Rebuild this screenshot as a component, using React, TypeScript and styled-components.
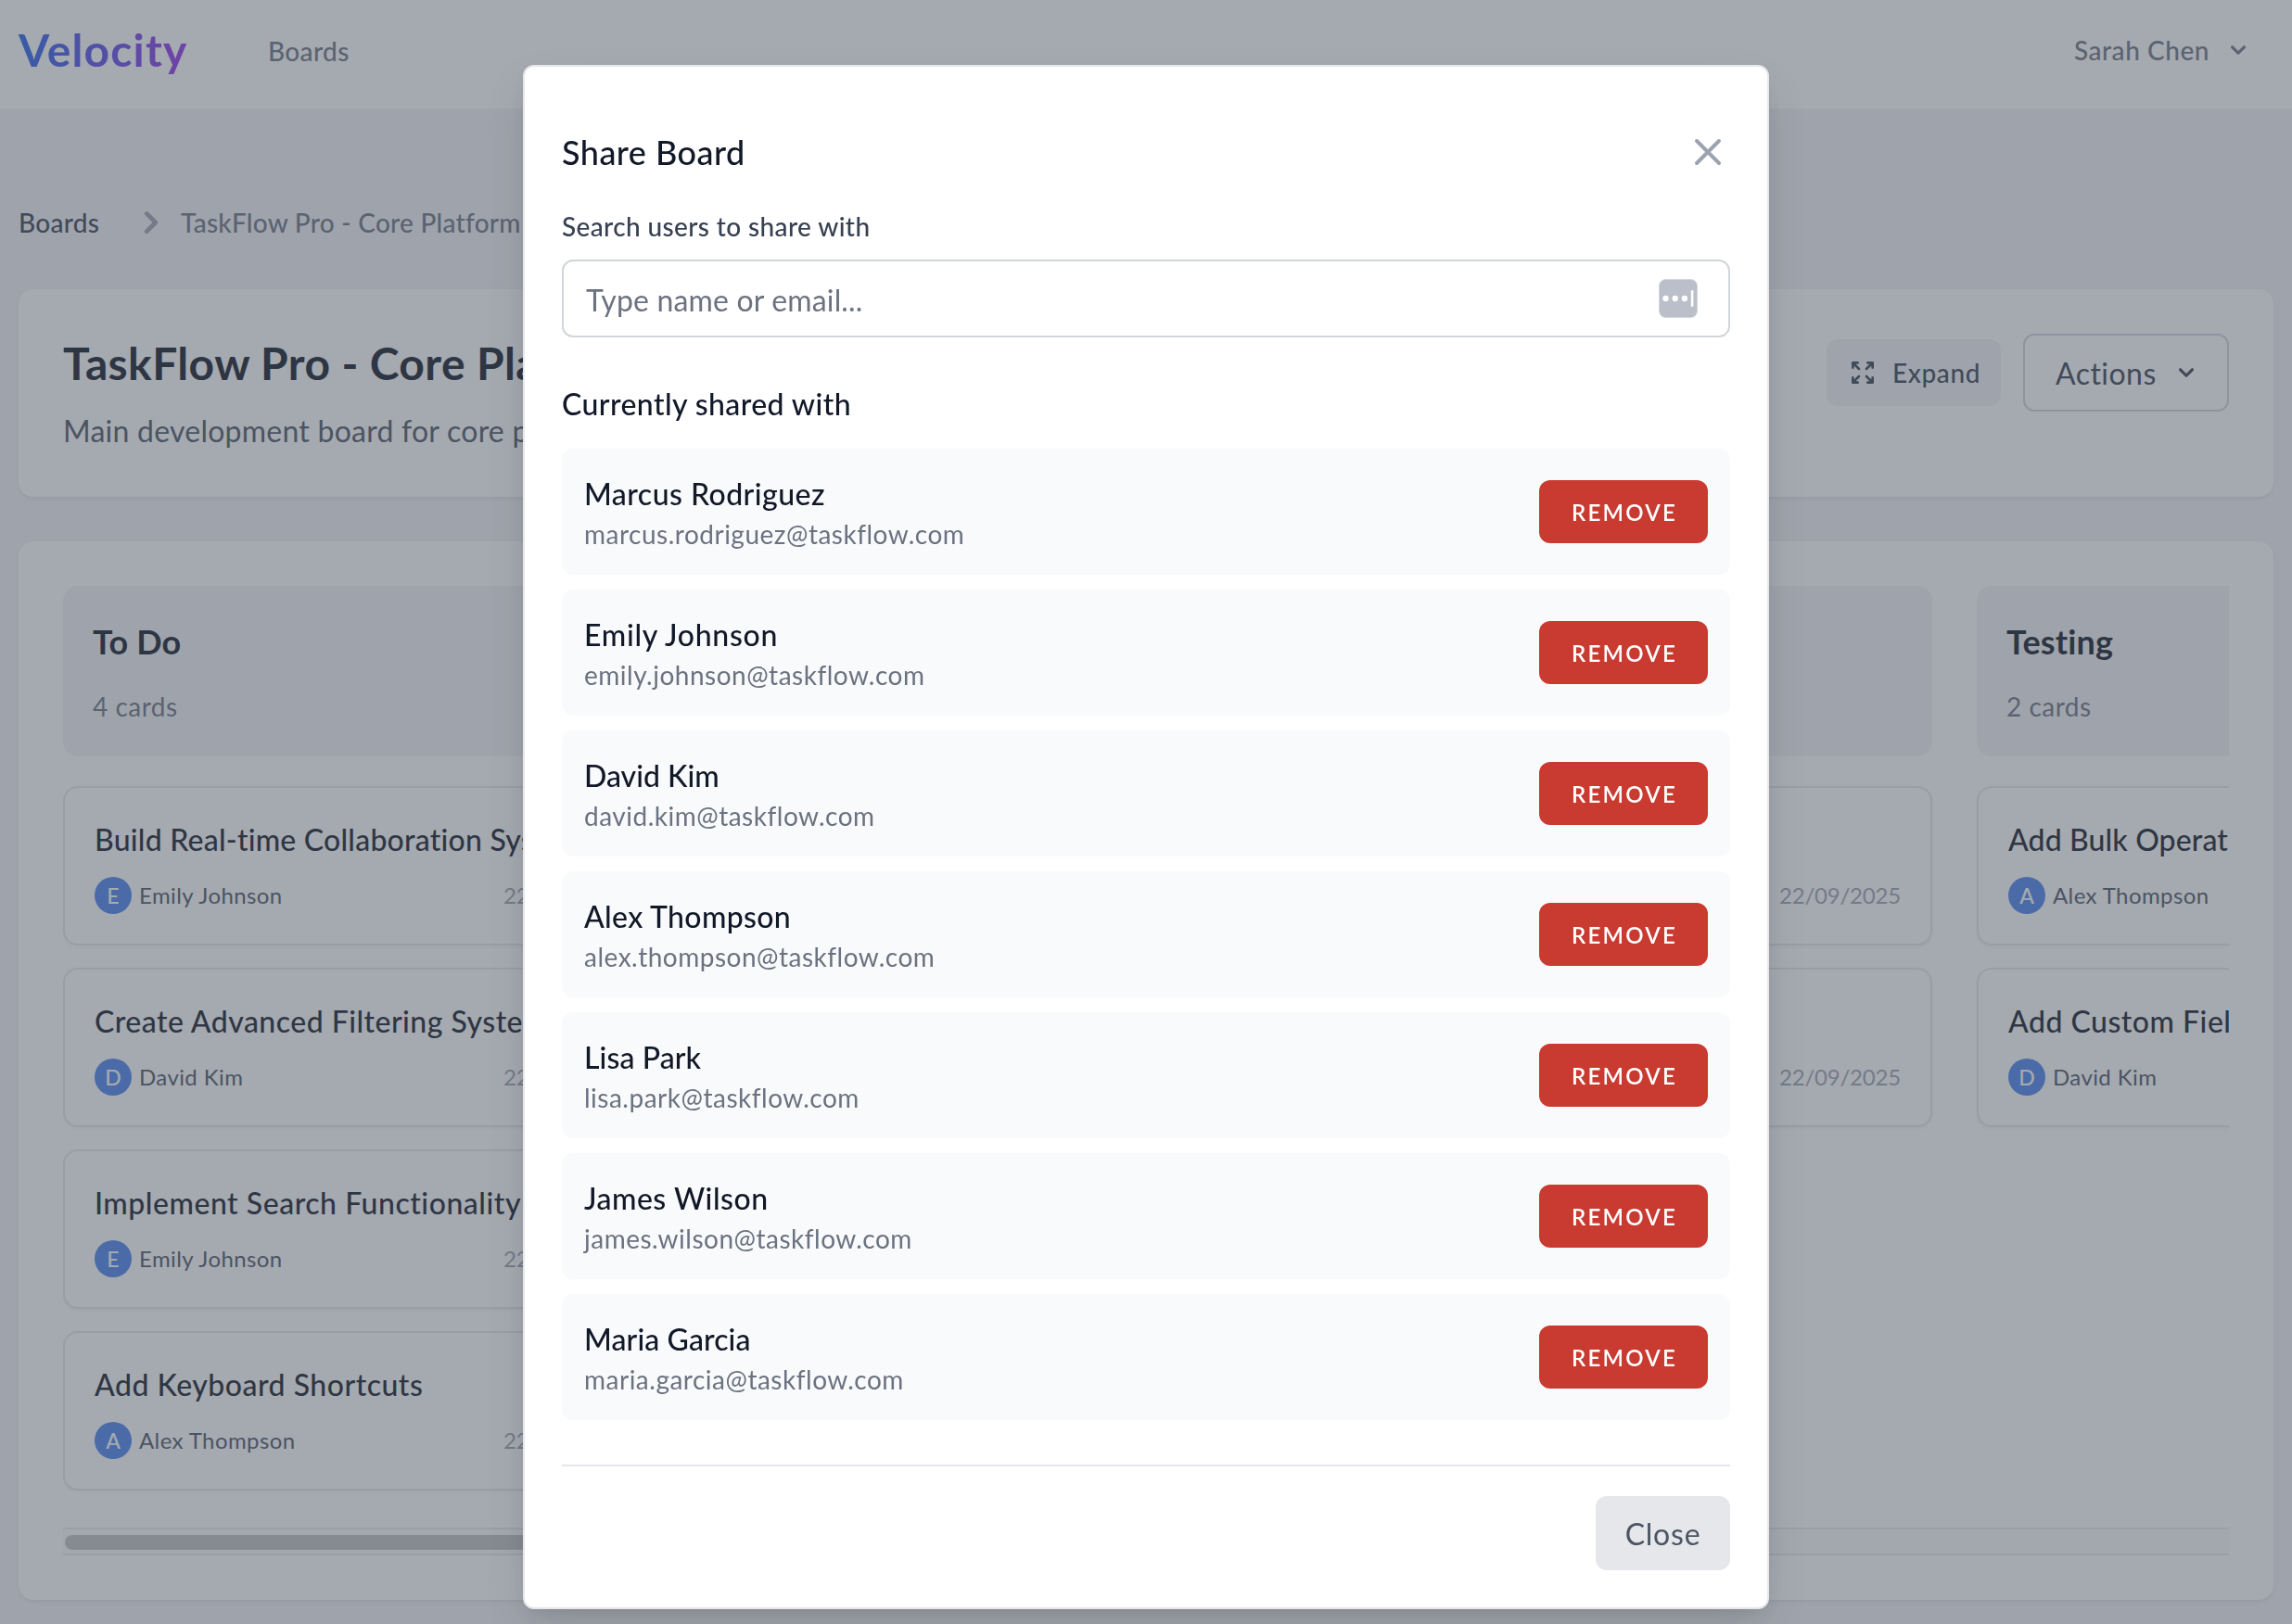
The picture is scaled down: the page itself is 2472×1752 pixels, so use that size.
import React from "react";
import styled, { createGlobalStyle, css } from "styled-components";

const gray = {
  50: "#f9fafb",
  100: "#f3f4f6",
  200: "#e5e7eb",
  300: "#d1d5db",
  400: "#9ca3af",
  500: "#6b7280",
  600: "#4b5563",
  700: "#374151",
  900: "#111827",
};

const GlobalStyle = createGlobalStyle`
  *, *::before, *::after { box-sizing: border-box; }
  html, body { margin: 0; padding: 0; }
  body {
    background: ${gray[100]};
    color: ${gray[900]};
    font-family: Lato, "Open Sans", sans-serif;
    font-variant-ligatures: none;
    overflow: hidden;
  }
  button, input { font-family: inherit; margin: 0; }
  h1, h2, h3, h4, p { margin: 0; }
`;

const type = (size: number, line: number, weight = 400, spacing = 0) => css`
  font-size: ${size}px;
  line-height: ${line}px;
  font-weight: ${weight};
  letter-spacing: ${spacing}px;
  white-space: nowrap;
`;

const panel = css`
  background: #fff;
  border-radius: 16px;
  box-shadow: 0 2px 6px rgba(0, 0, 0, 0.06), 0 2px 4px -2px rgba(0, 0, 0, 0.06);
`;

const Page = styled.div`
  height: 1752px;
  overflow: hidden;
`;

/* Navigation */

const Nav = styled.nav`
  height: 118px;
  padding: 0 42px 10px 20px;
  display: flex;
  align-items: center;
  background: #fff;
  border-bottom: 1px solid ${gray[100]};
`;

const Logo = styled.div`
  flex: 0 0 269px;
  ${type(48, 64, 700, 1.15)}
  span {
    background: linear-gradient(to right, #2563eb, #9333ea);
    -webkit-background-clip: text;
    background-clip: text;
    color: transparent;
    display: inline-block;
  }
`;

const NavLink = styled.a`
  padding-top: 3px;
  color: ${gray[500]};
  ${type(28, 40, 500, 0.35)}
`;

const UserMenu = styled.button`
  margin-left: auto;
  padding: 0;
  border: 0;
  background: none;
  display: flex;
  align-items: center;
  gap: 15px;
  color: ${gray[500]};
  ${type(28, 40, 500, 0.55)}
`;

/* Page body */

const Body = styled.main`
  padding: 98px 20px 26px;
  display: flex;
  flex-direction: column;
  gap: 48px;
`;

const Breadcrumb = styled.div`
  height: 48px;
  display: flex;
  align-items: center;
  color: ${gray[400]};
`;

const Crumb = styled.span<{ $current?: boolean }>`
  flex: ${(p) => (p.$current ? "none" : "0 0 119px")};
  margin-left: ${(p) => (p.$current ? 8 : 0)}px;
  color: ${(p) => (p.$current ? gray[500] : gray[700])};
  ${type(28, 40, 500, 0.25)}
`;

const BoardHeader = styled.header`
  ${panel}
  height: 224px;
  padding: 48px;
  display: flex;
  justify-content: space-between;
  align-items: flex-start;
`;

const BoardTitle = styled.h1`
  padding-top: 2px;
  ${type(48, 60, 700, 0.38)}
`;

const BoardDescription = styled.p`
  margin-top: 19px;
  color: ${gray[600]};
  ${type(32, 48, 400, 0.24)}
`;

const HeaderActions = styled.div`
  display: flex;
  align-items: center;
  gap: 24px;
`;

const ExpandButton = styled.button`
  width: 188px;
  height: 72px;
  padding: 0 0 0 23px;
  border: 0;
  border-radius: 12px;
  background: ${gray[100]};
  color: ${gray[700]};
  display: flex;
  align-items: center;
  gap: 16px;
  ${type(28, 40, 500, 0.6)}
`;

const ActionsButton = styled.button`
  width: 222px;
  height: 84px;
  padding: 0 28px 0 33px;
  border: 2px solid ${gray[300]};
  border-radius: 12px;
  background: #fff;
  color: ${gray[700]};
  display: flex;
  align-items: center;
  justify-content: space-between;
  ${type(32, 48, 400, 0.46)}
  span { padding-top: 1px; }
`;

/* Columns */

const BoardPanel = styled.section`
  ${panel}
  padding: 48px;
`;

const Columns = styled.div`
  height: 1016px;
  display: flex;
  gap: 48px;
  overflow: hidden;
`;

const ColumnBox = styled.section`
  flex: 0 0 640px;
  display: flex;
  flex-direction: column;
  gap: 24px;
`;

const ColumnHeader = styled.header`
  height: 184px;
  margin-bottom: 8px;
  padding: 32px;
  border-radius: 16px;
  background: ${gray[100]};
`;

const ColumnTitle = styled.h2`
  ${type(36, 56, 700, 0.15)}
`;

const ColumnCount = styled.p`
  margin-top: 22px;
  color: ${gray[500]};
  ${type(28, 40, 400, 0.5)}
`;

const CardBox = styled.article`
  height: 172px;
  padding: 33px 32px 32px;
  border: 2px solid ${gray[200]};
  border-radius: 16px;
  background: #fff;
  box-shadow: 0 2px 4px rgba(0, 0, 0, 0.05);
`;

const CardTitle = styled.h3<{ $tracking?: number }>`
  ${type(32, 46, 500)}
  letter-spacing: ${(p) => p.$tracking ?? 0.22}px;
`;

const CardMeta = styled.div`
  margin-top: 17px;
  height: 40px;
  display: flex;
  align-items: center;
  color: ${gray[600]};
  ${type(24, 32, 400, 0.4)}
`;

const Avatar = styled.span`
  width: 40px;
  height: 40px;
  margin-right: 8px;
  border-radius: 50%;
  background: #4883ec;
  color: #fff;
  display: flex;
  align-items: center;
  justify-content: center;
  ${type(23, 32, 500)}
`;

const CardDate = styled.time`
  margin-left: auto;
  color: ${gray[400]};
  letter-spacing: -0.2px;
`;

const ScrollTrack = styled.div`
  height: 30px;
  padding: 6px 2px;
  border: solid #e8e8e8;
  border-width: 2px 0;
  background: #fafafa;
`;

const ScrollThumb = styled.div`
  width: 69%;
  height: 16px;
  border-radius: 8px;
  background: #c1c1c1;
`;

/* Share dialog */

const Overlay = styled.div`
  position: fixed;
  inset: 0;
  padding-top: 70px;
  display: flex;
  justify-content: center;
  align-items: flex-start;
  background: rgba(76, 83, 98, 0.5);
`;

const Dialog = styled.div`
  width: 1344px;
  padding: 68px 40px 40px;
  border: 2px solid ${gray[200]};
  border-radius: 12px;
  background: #fff;
  box-shadow: 0 20px 50px -6px rgba(0, 0, 0, 0.12), 0 8px 20px -8px rgba(0, 0, 0, 0.12);
`;

const DialogHeader = styled.header`
  height: 48px;
  display: flex;
  justify-content: space-between;
  align-items: flex-start;
`;

const DialogTitle = styled.h3`
  ${type(36, 48, 500, 0.48)}
`;

const IconButton = styled.button`
  padding: 0;
  border: 0;
  background: none;
  color: ${gray[400]};
  display: flex;
`;

const Label = styled.label`
  display: block;
  margin: 36px 0 16px;
  color: ${gray[700]};
  ${type(28, 40, 500, 0.38)}
`;

const Field = styled.div`
  height: 84px;
  padding: 0 33px 0 24px;
  border: 2px solid ${gray[300]};
  border-radius: 12px;
  display: flex;
  align-items: center;
`;

const Input = styled.input`
  flex: 1;
  height: 48px;
  padding: 2px 0 0;
  border: 0;
  outline: 0;
  background: none;
  ${type(32, 46, 400, 0.16)}
  &::placeholder { color: ${gray[500]}; opacity: 1; }
`;

const SectionTitle = styled.h4`
  margin: 48px 0 24px;
  ${type(32, 48, 500, 0.41)}
`;

const UserList = styled.div`
  display: flex;
  flex-direction: column;
  gap: 16px;
`;

const UserRow = styled.div`
  height: 136px;
  padding: 24px;
  border-radius: 12px;
  background: ${gray[50]};
  display: flex;
  justify-content: space-between;
  align-items: center;
`;

const UserInfo = styled.div`
  align-self: flex-start;
  padding-top: 1px;
`;

const UserName = styled.p<{ $tracking: number }>`
  ${type(32, 47, 500)}
  letter-spacing: ${(p) => p.$tracking}px;
`;

const UserEmail = styled.p`
  color: ${gray[500]};
  ${type(28, 40, 400, 0.5)}
`;

const RemoveButton = styled.button`
  width: 182px;
  height: 68px;
  padding: 1px 0 0 2px;
  border: 0;
  border-radius: 12px;
  background: #c93a31;
  color: #fff;
  text-transform: uppercase;
  text-align: center;
  ${type(24, 32, 600, 2.25)}
`;

const DialogFooter = styled.footer`
  margin-top: 48px;
  padding-top: 32px;
  border-top: 2px solid ${gray[200]};
  display: flex;
  justify-content: flex-end;
`;

const CloseButton = styled.button`
  width: 145px;
  height: 80px;
  padding: 2px 0 0;
  border: 0;
  border-radius: 12px;
  background: ${gray[200]};
  color: ${gray[600]};
  ${type(32, 48, 400, 0.77)}
`;

/* Icons */

const ChevronDown = () => (
  <svg width="32" height="32" viewBox="0 0 20 20" fill="currentColor">
    <path
      fillRule="evenodd"
      clipRule="evenodd"
      d="M5.293 7.293a1 1 0 011.414 0L10 10.586l3.293-3.293a1 1 0 111.414 1.414l-4 4a1 1 0 01-1.414 0l-4-4a1 1 0 010-1.414z"
    />
  </svg>
);

const ChevronRight = () => (
  <svg width="48" height="48" viewBox="0 0 20 20" fill="currentColor">
    <path
      fillRule="evenodd"
      clipRule="evenodd"
      d="M7.293 14.707a1 1 0 010-1.414L10.586 10 7.293 6.707a1 1 0 011.414-1.414l4 4a1 1 0 010 1.414l-4 4a1 1 0 01-1.414 0z"
    />
  </svg>
);

const StrokeIcon = ({ size, d }: { size: number; d: string }) => (
  <svg width={size} height={size} viewBox="0 0 24 24" fill="none" stroke="currentColor" strokeWidth="2" strokeLinecap="round" strokeLinejoin="round">
    <path d={d} />
  </svg>
);

const EXPAND = "M4 8V4m0 0h4M4 4l5 5m11-1V4m0 0h-4m4 0l-5 5M4 16v4m0 0h4m-4 0l5-5m11 5l-5-5m5 5v-4m0 4h-4";
const CROSS = "M6 18L18 6M6 6l12 12";

const AutofillIcon = () => (
  <svg width="42" height="42" viewBox="0 0 42 42">
    <rect x="0.5" y="0.5" width="41" height="41" rx="7" fill="#babfc9" stroke="#d3d6dc" />
    <circle cx="7.5" cy="21" r="3.2" fill="#fff" />
    <circle cx="17.7" cy="21" r="3.2" fill="#fff" />
    <circle cx="27.9" cy="21" r="3.2" fill="#fff" />
    <rect x="34.8" y="12" width="2.6" height="18" rx="1.3" fill="#fff" />
  </svg>
);

/* Data */

type Card = { title: string; assignee: string; tracking?: number };
type Column = { title: string; cards: Card[] };

const DATE = "22/09/2025";

const columns: Column[] = [
  {
    title: "To Do",
    cards: [
      { title: "Build Real-time Collaboration System", assignee: "Emily Johnson" },
      { title: "Create Advanced Filtering System", assignee: "David Kim", tracking: 0.47 },
      { title: "Implement Search Functionality", assignee: "Emily Johnson", tracking: 0.52 },
      { title: "Add Keyboard Shortcuts", assignee: "Alex Thompson", tracking: 0.5 },
    ],
  },
  { title: "", cards: [] },
  {
    title: "",
    cards: [
      { title: "", assignee: "" },
      { title: "", assignee: "" },
    ],
  },
  {
    title: "Testing",
    cards: [
      { title: "Add Bulk Operations", assignee: "Alex Thompson", tracking: 0.12 },
      { title: "Add Custom Fields", assignee: "David Kim", tracking: 0.5 },
    ],
  },
];

const sharedWith = [
  { name: "Marcus Rodriguez", tracking: 0.46 },
  { name: "Emily Johnson", tracking: 0.7 },
  { name: "David Kim", tracking: 0 },
  { name: "Alex Thompson", tracking: 0.34 },
  { name: "Lisa Park", tracking: 0.1 },
  { name: "James Wilson", tracking: 0.5 },
  { name: "Maria Garcia", tracking: 0.1 },
];

const emailOf = (name: string) => `${name.toLowerCase().replace(" ", ".")}@taskflow.com`;

const BoardCard = ({ card }: { card: Card }) => (
  <CardBox>
    <CardTitle $tracking={card.tracking}>{card.title || "\u00a0"}</CardTitle>
    <CardMeta>
      {card.assignee && <Avatar>{card.assignee[0]}</Avatar>}
      <span>{card.assignee}</span>
      <CardDate>{DATE}</CardDate>
    </CardMeta>
  </CardBox>
);

const BoardColumn = ({ column }: { column: Column }) => (
  <ColumnBox>
    <ColumnHeader>
      {column.title && (
        <>
          <ColumnTitle>{column.title}</ColumnTitle>
          <ColumnCount>{column.cards.length} cards</ColumnCount>
        </>
      )}
    </ColumnHeader>
    {column.cards.map((card, i) => (
      <BoardCard key={i} card={card} />
    ))}
  </ColumnBox>
);

const ShareDialog = () => (
  <Overlay>
    <Dialog role="dialog" aria-modal="true">
      <DialogHeader>
        <DialogTitle>Share Board</DialogTitle>
        <IconButton>
          <StrokeIcon size={48} d={CROSS} />
        </IconButton>
      </DialogHeader>
      <Label htmlFor="user-search">Search users to share with</Label>
      <Field>
        <Input id="user-search" placeholder="Type name or email..." />
        <AutofillIcon />
      </Field>
      <SectionTitle>Currently shared with</SectionTitle>
      <UserList>
        {sharedWith.map(({ name, tracking }) => (
          <UserRow key={name}>
            <UserInfo>
              <UserName $tracking={tracking}>{name}</UserName>
              <UserEmail>{emailOf(name)}</UserEmail>
            </UserInfo>
            <RemoveButton>Remove</RemoveButton>
          </UserRow>
        ))}
      </UserList>
      <DialogFooter>
        <CloseButton>Close</CloseButton>
      </DialogFooter>
    </Dialog>
  </Overlay>
);

export default function App() {
  return (
    <>
      <GlobalStyle />
      <Page>
        <Nav>
          <Logo>
            <span>Velocity</span>
          </Logo>
          <NavLink>Boards</NavLink>
          <UserMenu>
            Sarah Chen
            <ChevronDown />
          </UserMenu>
        </Nav>
        <Body>
          <Breadcrumb>
            <Crumb>Boards</Crumb>
            <ChevronRight />
            <Crumb $current>TaskFlow Pro - Core Platform</Crumb>
          </Breadcrumb>
          <BoardHeader>
            <div>
              <BoardTitle>TaskFlow Pro - Core Platform</BoardTitle>
              <BoardDescription>Main development board for core platform</BoardDescription>
            </div>
            <HeaderActions>
              <ExpandButton>
                <StrokeIcon size={32} d={EXPAND} />
                <span>Expand</span>
              </ExpandButton>
              <ActionsButton>
                <span>Actions</span>
                <ChevronDown />
              </ActionsButton>
            </HeaderActions>
          </BoardHeader>
          <BoardPanel>
            <Columns>
              {columns.map((column, i) => (
                <BoardColumn key={i} column={column} />
              ))}
            </Columns>
            <ScrollTrack>
              <ScrollThumb />
            </ScrollTrack>
          </BoardPanel>
        </Body>
      </Page>
      <ShareDialog />
    </>
  );
}
